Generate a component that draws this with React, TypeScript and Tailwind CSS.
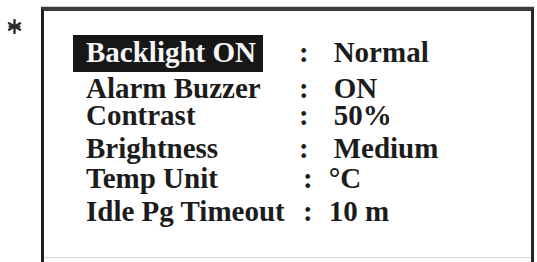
import React from "react";

type Row = {
  label: string;
  value: string;
  rowClass: string;
  labelClass: string;
  valueClass: string;
  active?: boolean;
};

const rows: Row[] = [
  { label: "Backlight ON", value: "Normal", rowClass: "mt-[24px]", labelClass: "w-[226px]", valueClass: "ml-[25px]", active: true },
  { label: "Alarm Buzzer", value: "ON", rowClass: "mt-[3px]", labelClass: "w-[226px]", valueClass: "ml-[25px]" },
  { label: "Contrast", value: "50%", rowClass: "mt-0", labelClass: "w-[226px]", valueClass: "ml-[25px]" },
  { label: "Brightness", value: "Medium", rowClass: "mt-[6px]", labelClass: "w-[226px]", valueClass: "ml-[25px]" },
  { label: "Temp Unit", value: "°C", rowClass: "mt-[3px]", labelClass: "w-[230px]", valueClass: "ml-[16px]" },
  { label: "Idle Pg Timeout", value: "10 m", rowClass: "mt-[6px]", labelClass: "w-[230px]", valueClass: "ml-[16px]" },
];

function Asterisk() {
  return (
    <svg width="15" height="15" viewBox="0 0 14 14" className="ml-[7px] mt-[19px]">
      <g stroke="#2a2a2a" strokeWidth="2.2" strokeLinecap="round">
        <line x1="7" y1="1" x2="7" y2="13" />
        <line x1="1.8" y1="4" x2="12.2" y2="10" />
        <line x1="12.2" y1="4" x2="1.8" y2="10" />
        <line x1="2.5" y1="7" x2="11.5" y2="7" />
      </g>
      <circle cx="7" cy="7" r="2.2" fill="#2a2a2a" />
    </svg>
  );
}

function SettingRow({ row }: { row: Row }) {
  const lead = row.active ? "leading-[35px]" : "leading-[27px]";
  return (
    <div className={`flex items-start ${row.rowClass}`}>
      {row.active ? (
        <div className={`${row.labelClass} flex`}>
          <span className="block w-[190px] bg-[#171717] pb-[2px] pl-[13px] leading-[35px] text-[#f7f7f7]">
            {row.label}
          </span>
        </div>
      ) : (
        <span className={`${row.labelClass} block pl-[13px] ${lead}`}>{row.label}</span>
      )}
      <span className={lead}>:</span>
      <span className={`${row.valueClass} ${lead}`}>{row.value}</span>
    </div>
  );
}

export default function App() {
  return (
    <div className="flex h-[262px] w-[537px] overflow-hidden bg-white font-['Liberation_Serif','Times_New_Roman',serif] text-[29px] font-bold text-[#1c1c1c]">
      <div className="w-[41px] shrink-0">
        <Asterisk />
      </div>
      <div className="mt-[6px] flex h-[256px] w-[493px] flex-col border-t border-t-[#cfcfcf]">
        <div className="flex flex-1 flex-col border-t-[4px] border-r-[3px] border-l-[3px] border-t-[#3d3d3d] border-r-[#262626] border-l-[#1f1f1f]">
          <div className="flex-1 pl-[29px]">
            {rows.map((row) => (
              <SettingRow key={row.label} row={row} />
            ))}
          </div>
          <div className="h-px bg-[#d6d6d6]" />
          <div className="h-[4px]" />
        </div>
      </div>
    </div>
  );
}
